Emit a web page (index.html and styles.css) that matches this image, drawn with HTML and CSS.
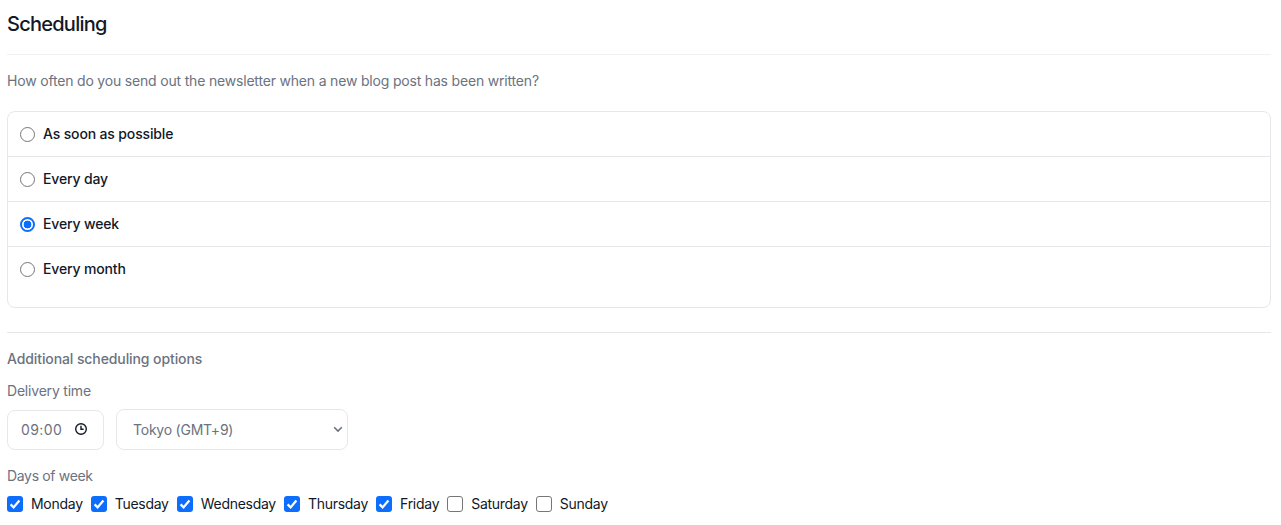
FILE: index.html
```html
<!DOCTYPE html>
<html lang="en">
<head>
<meta charset="utf-8">
<title>Scheduling</title>
<link rel="stylesheet" href="styles.css">
</head>
<body>
<main class="page">
  <header class="head"><h1 class="title">Scheduling</h1></header>
  <p class="lead">How often do you send out the newsletter when a new blog post has been written?</p>
  <div class="card">
    <label class="row"><input class="radio" type="radio" name="freq"><span>As soon as possible</span></label>
    <label class="row"><input class="radio" type="radio" name="freq"><span>Every day</span></label>
    <label class="row"><input class="radio" type="radio" name="freq" checked><span>Every week</span></label>
    <label class="row row-last"><input class="radio" type="radio" name="freq"><span>Every month</span></label>
  </div>
  <hr class="rule">
  <h2 class="sub">Additional scheduling options</h2>
  <div class="label label-time">Delivery time</div>
  <div class="controls">
    <div class="time">
      <span class="time-val">09:00</span>
      <svg class="clock" width="14" height="14" viewBox="0 0 14 14" fill="none" stroke="#111827" stroke-width="1.4"><circle cx="7" cy="7" r="5.3"/><path d="M7 3.8V7.3H9.6"/></svg>
    </div>
    <div class="select">
      <span>Tokyo (GMT+9)</span>
      <svg class="chev" width="10" height="7" viewBox="0 0 10 7" fill="none" stroke="#6b7280" stroke-width="1.6"><path d="M1.2 1.3L5 5.1L8.8 1.3"/></svg>
    </div>
  </div>
  <div class="label label-days">Days of week</div>
  <div class="days">
    <label class="day"><input class="check" type="checkbox" checked><span>Monday</span></label>
    <label class="day"><input class="check" type="checkbox" checked><span>Tuesday</span></label>
    <label class="day"><input class="check" type="checkbox" checked><span>Wednesday</span></label>
    <label class="day"><input class="check" type="checkbox" checked><span>Thursday</span></label>
    <label class="day"><input class="check" type="checkbox" checked><span>Friday</span></label>
    <label class="day"><input class="check" type="checkbox"><span>Saturday</span></label>
    <label class="day"><input class="check" type="checkbox"><span>Sunday</span></label>
  </div>
</main>
</body>
</html>
```

FILE: styles.css
```css
* { box-sizing: border-box; }
html, body { margin: 0; background: #fff; }
body {
  font-family: Inter, "Liberation Sans", sans-serif;
  font-size: 14px;
  line-height: 20px;
  color: #111827;
  overflow: hidden;
}
.page { padding: 0 10px 0 7px; }
.head { height: 55px; padding-top: 10px; border-bottom: 1px solid #f0f1f3; }
.title { margin: 0; font-size: 20px; line-height: 28px; font-weight: 500; letter-spacing: -0.75px; color: #111827; }
.lead { margin: 16px 0 0; color: #6b7280; height: 20px; letter-spacing: -0.185px; }
.card {
  margin-top: 20px;
  height: 197px;
  border: 1px solid #e5e7eb;
  border-radius: 8px;
}
.row {
  display: flex;
  align-items: center;
  gap: 8px;
  height: 45px;
  padding-left: 12px;
  border-bottom: 1px solid #e5e7eb;
  font-weight: 500;
  letter-spacing: -0.15px;
}
.row-last { border-bottom: 0; padding-bottom: 1px; }
.radio {
  appearance: none;
  margin: 0;
  width: 15px;
  height: 15px;
  border-radius: 50%;
  border: 1px solid #767676;
  background: #fff;
}
.radio:checked {
  border: 2px solid #0d6efd;
  background: radial-gradient(circle, #0d6efd 0, #0d6efd 3.6px, #fff 4.2px);
}
.rule { margin: 24px 0 0; border: 0; border-top: 1px solid #e5e7eb; }
.sub { margin: 16px 0 0; font-size: 14px; line-height: 20px; font-weight: 500; letter-spacing: -0.1px; color: #6b7280; }
.label { color: #6b7280; letter-spacing: -0.25px; }
.label-time { margin-top: 12px; letter-spacing: -0.2px; }
.controls { display: flex; align-items: center; gap: 12px; margin-top: 8px; }
.time {
  display: flex;
  align-items: center;
  justify-content: space-between;
  width: 97px;
  height: 40px;
  padding: 0 15px 0 13px;
  border: 1px solid #e5e7eb;
  border-radius: 8px;
  color: #6b7280;
  letter-spacing: 0.4px;
}
.clock { margin-top: -2px; }
.select {
  display: flex;
  align-items: center;
  justify-content: space-between;
  width: 232px;
  height: 41px;
  padding: 0 4px 0 16px;
  border: 1px solid #e5e7eb;
  border-radius: 8px;
  color: #6b7280;
  letter-spacing: -0.23px;
}
.label-days { margin-top: 16px; letter-spacing: -0.33px; }
.days { display: flex; gap: 8px; margin-top: 8px; }
.day { display: flex; align-items: center; gap: 8px; color: #111827; letter-spacing: -0.28px; }
.check {
  appearance: none;
  margin: 0;
  width: 16px;
  height: 16px;
  border: 1px solid #767676;
  border-radius: 3px;
  background: #fff;
}
.check:checked {
  border: 0;
  background: #0d6efd url("data:image/svg+xml,%3Csvg xmlns='http://www.w3.org/2000/svg' viewBox='0 0 16 16'%3E%3Cpath d='M3.6 8.4L6.6 11.4L12.4 4.6' fill='none' stroke='%23fff' stroke-width='2.3'/%3E%3C/svg%3E") center / 16px 16px no-repeat;
}
```
